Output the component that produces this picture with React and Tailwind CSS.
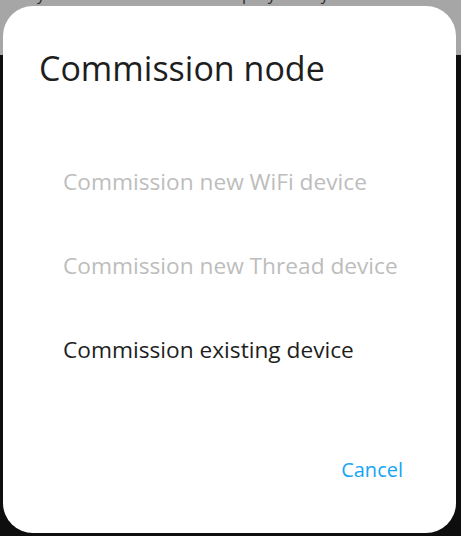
import React from 'react';

const items = [
  { label: 'Commission new WiFi device', disabled: true },
  { label: 'Commission new Thread device', disabled: true },
  { label: 'Commission existing device', disabled: false },
];

export default function App() {
  return (
    <div className="relative w-[461px] h-[536px] overflow-hidden bg-[#0e0e0e] font-['Open_Sans',sans-serif]">
      {/* Dimmed page behind the dialog, only descenders of its text peek out */}
      <div className="h-[55px] bg-[#a6a6a6] text-[#2a2a2a] text-[16px] leading-[20px] overflow-hidden">
        <div className="flex -mt-[16px]">
          <span className="ml-[37px]">y</span>
          <span className="ml-[197px]">p</span>
          <span className="ml-[16px]">y</span>
          <span className="ml-[45px]">y</span>
        </div>
      </div>

      {/* Dialog */}
      <div className="absolute left-[3px] top-[6px] w-[453px] h-[527px] bg-white rounded-[30px] flex flex-col">
        <h1 className="mt-[41px] ml-[36px] text-[34px] leading-[42px] text-[#1e1e1e]">
          Commission node
        </h1>

        <ul className="mt-[51px] flex flex-col">
          {items.map((item) => (
            <li
              key={item.label}
              className={`h-[84px] flex items-center pl-[60px] text-[22.7px] ${
                item.disabled ? 'text-[#bdbdbd]' : 'text-[#1e1e1e]'
              }`}
            >
              {item.label}
            </li>
          ))}
        </ul>

        <div className="mt-[64px] flex justify-end pr-[53px]">
          <button className="h-[28px] text-[20px] leading-[28px] text-[#16a5f5]">Cancel</button>
        </div>
      </div>
    </div>
  );
}
